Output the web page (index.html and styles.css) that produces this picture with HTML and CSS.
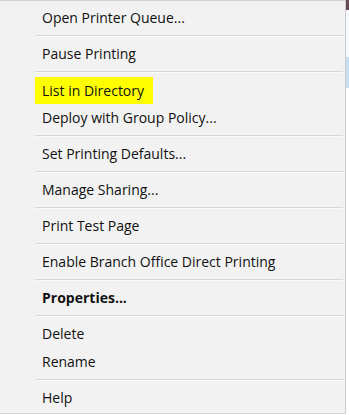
FILE: index.html
```html
<!DOCTYPE html>
<html>
<head>
<meta charset="utf-8">
<link rel="stylesheet" href="styles.css">
</head>
<body>
<div class="screen">
  <div class="menu">
    <div class="item"><span class="label">Open Printer Queue...</span></div>
    <div class="sep"></div>
    <div class="item"><span class="label">Pause Printing</span></div>
    <div class="sep"></div>
    <div class="item"><span class="label highlight">List in Directory</span></div>
    <div class="item"><span class="label">Deploy with Group Policy...</span></div>
    <div class="sep"></div>
    <div class="item"><span class="label">Set Printing Defaults...</span></div>
    <div class="sep"></div>
    <div class="item"><span class="label">Manage Sharing...</span></div>
    <div class="sep"></div>
    <div class="item"><span class="label">Print Test Page</span></div>
    <div class="sep"></div>
    <div class="item"><span class="label">Enable Branch Office Direct Printing</span></div>
    <div class="sep"></div>
    <div class="item"><span class="label bold">Properties...</span></div>
    <div class="sep"></div>
    <div class="item"><span class="label">Delete</span></div>
    <div class="item"><span class="label">Rename</span></div>
    <div class="sep"></div>
    <div class="item"><span class="label">Help</span></div>
  </div>
  <div class="behind">
    <div class="b-dark"></div>
    <div class="b-light"></div>
    <div class="b-blue"></div>
    <div class="b-white"></div>
  </div>
</div>
</body>
</html>
```

FILE: styles.css
```css
html, body {
  margin: 0;
  padding: 0;
  background: #ffffff;
}

.screen {
  display: flex;
  width: 349px;
  height: 415px;
  overflow: hidden;
}

.menu {
  width: 345px;
  flex: none;
  background: #f2f2f2;
  border-top: 1px solid #cfcfcf;
  border-right: 1px solid #cccccc;
  border-bottom: 1px solid #d4d4d4;
  padding: 2px 0;
  height: 408px;
  font-family: "Open Sans", "Noto Sans", sans-serif;
  font-size: 14px;
  color: #111111;
}

.item {
  height: 28px;
  display: flex;
  align-items: center;
  padding-left: 35px;
}

.label {
  display: flex;
  align-items: center;
  height: 27px;
  padding: 0 9px 0 7px;
  white-space: nowrap;
}

.highlight {
  background: #ffff00;
  margin-top: 2px;
}

.bold {
  font-weight: 700;
}

.sep {
  height: 8px;
  display: flex;
  flex-direction: column;
  justify-content: center;
  margin-left: 35px;
  margin-right: 2px;
  box-sizing: border-box;
  padding-top: 1px;
}

.sep::before {
  content: "";
  display: block;
  height: 1px;
  background: #d7d7d7;
  border-bottom: 1px solid #fafafa;
}

.behind {
  width: 3px;
  flex: none;
  display: flex;
  flex-direction: column;
}

.b-dark {
  height: 10px;
  background: #6a4a55;
}

.b-light {
  height: 47px;
  background: #f6f9fc;
}

.b-blue {
  height: 31px;
  background: #c6def4;
}

.b-white {
  flex: 1;
  background: #ffffff;
}
```
